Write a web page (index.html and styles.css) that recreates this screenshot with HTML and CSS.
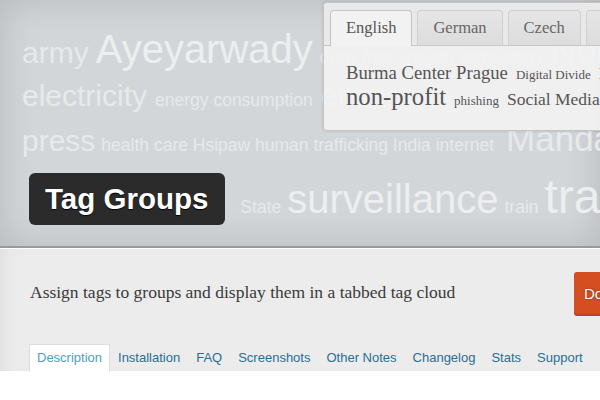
FILE: index.html
```html
<!DOCTYPE html>
<html>
<head>
<meta charset="utf-8">
<title>Tag Groups</title>
<link rel="stylesheet" href="styles.css">
</head>
<body>
<header class="hero">
  <div class="cloud">
    <div class="row r1"><span class="w30">army</span><span class="w40">Ayeyarwady</span><span class="w17">draw free speech technology</span><span class="w36">Non-violence</span></div>
    <div class="row r2"><span class="w30">electricity</span><span class="w17">energy consumption</span><span class="w30">ethnic</span><span class="w17">Facebook</span></div>
    <div class="row r3"><span class="w30">press</span><span class="w17">health care Hsipaw human trafficking India internet</span><span class="w35 mandalay">Mandalay</span></div>
    <div class="row r4"><div class="badge">Tag Groups</div><span class="w17">State</span><span class="w40">surveillance</span><span class="w17">train</span><span class="w48">transparency</span></div>
  </div>
  <div class="langs">
    <div class="lang-tabs">
      <span class="lang-tab active">English</span>
      <span class="lang-tab">German</span>
      <span class="lang-tab">Czech</span>
      <span class="lang-tab">Burmese</span>
    </div>
    <div class="lang-cloud">
      <div class="lrow"><span class="s19">Burma Center Prague</span><span class="s13">Digital Divide</span><span class="s17">Internet</span></div>
      <div class="lrow second"><span class="s25">non-profit</span><span class="s13">phishing</span><span class="s17">Social Media</span></div>
    </div>
  </div>
</header>
<section class="plugin">
  <div class="intro">
    <p class="desc">Assign tags to groups and display them in a tabbed tag cloud</p>
    <a class="download">Download Version 0.8</a>
  </div>
  <nav class="tabs">
    <a class="tab current">Description</a>
    <a class="tab">Installation</a>
    <a class="tab">FAQ</a>
    <a class="tab">Screenshots</a>
    <a class="tab">Other Notes</a>
    <a class="tab">Changelog</a>
    <a class="tab">Stats</a>
    <a class="tab">Support</a>
  </nav>
</section>
<div class="rest"></div>
</body>
</html>
```

FILE: styles.css
```css
html, body {
  margin: 0;
  padding: 0;
  background: #ffffff;
  overflow: hidden;
  width: 600px;
  height: 400px;
}

.hero {
  position: relative;
  height: 246px;
  background: #d3d6d9;
  box-shadow: inset 0 0 36px rgba(0, 0, 0, 0.14);
  border-bottom: 2px solid #979b9f;
  overflow: hidden;
  font-family: "Liberation Sans", Arial, sans-serif;
}

.cloud {
  padding: 29px 0 0 22px;
  color: #e7e9eb;
}

.row {
  display: flex;
  align-items: baseline;
  gap: 7px;
  white-space: nowrap;
  line-height: 1;
}

.row span { line-height: 1; }

.r2 { margin-top: 12px; gap: 8px; }
.r3 { margin-top: 10px; gap: 6px; }
.r4 { margin-top: 17px; gap: 6px; }

.w17 { font-size: 17.5px; }
.w30 { font-size: 30px; }
.w35 { font-size: 35px; }
.w36 { font-size: 36px; }
.w40 { font-size: 40px; color: #eceef0; }
.w48 { font-size: 48px; color: #eceef0; }

.mandalay { margin-left: 6px; }

.badge {
  align-self: flex-start;
  margin-left: 7px;
  margin-right: 9px;
  height: 52px;
  line-height: 52px;
  padding: 0 17px 0 16px;
  background: #2b2b2b;
  border-radius: 6px;
  color: #ffffff;
  font-weight: bold;
  font-size: 29.5px;
  text-shadow: 0 1px 1px #000;
}

/* language tab panel overlay */
.langs {
  position: absolute;
  left: 323px;
  top: 2px;
  width: 300px;
  height: 127px;
  background: rgba(242, 242, 242, 0.93);
  border: 1px solid #c4c4c4;
  border-radius: 4px;
  box-shadow: 0 0 3px rgba(0, 0, 0, 0.15);
  font-family: "Liberation Serif", "Times New Roman", serif;
}

.lang-tabs {
  display: flex;
  gap: 5px;
  padding: 7px 0 0 6px;
  border-bottom: 1px solid #c8c8c8;
  background: rgba(232, 232, 232, 0.9);
  border-radius: 4px 4px 0 0;
}

.lang-tab {
  height: 34px;
  line-height: 34px;
  padding: 0 15px;
  font-size: 16.5px;
  color: #666666;
  border: 1px solid #cfcfcf;
  border-bottom: none;
  border-radius: 4px 4px 0 0;
  background: linear-gradient(#e6e6e6, #dcdcdc);
  white-space: nowrap;
}

.lang-tab.active {
  color: #555555;
  background: #f2f2f2;
  border-color: #c4c4c4;
  height: 35px;
  margin-bottom: -1px;
}

.lang-cloud {
  padding: 18px 0 0 22px;
  color: #555555;
}

.lrow {
  display: flex;
  align-items: baseline;
  gap: 8px;
  white-space: nowrap;
  line-height: 1;
}

.lrow.second { margin-top: 2px; }

.s13 { font-size: 13px; }
.s17 { font-size: 17.5px; }
.s19 { font-size: 18.7px; }
.s25 { font-size: 24.7px; }

/* plugin info section */
.plugin {
  background: #ececec;
  border-top: 1px solid #ffffff;
  box-shadow: inset 12px 0 20px -12px rgba(0, 0, 0, 0.08);
  height: 123px;
  box-sizing: border-box;
  padding: 23px 0 0 29px;
}

.intro {
  display: flex;
  align-items: center;
  width: 760px;
}

.desc {
  flex-shrink: 0;
  margin: 0 0 0 1px;
  padding-bottom: 4px;
  width: 544px;
  font-family: "Liberation Serif", "Times New Roman", serif;
  font-size: 17.5px;
  line-height: 16px;
  color: #3a3a3a;
}

.download {
  display: block;
  flex-shrink: 0;
  height: 44px;
  line-height: 44px;
  padding: 0 10px;
  background: #d54e21;
  border-radius: 3px;
  color: #ffffff;
  font-family: "Liberation Sans", Arial, sans-serif;
  font-size: 15px;
  text-shadow: 0 0 2px #7a2a10;
  white-space: nowrap;
  box-shadow: inset 0 -2px 0 rgba(0, 0, 0, 0.12);
}

.tabs {
  display: flex;
  margin-top: 28px;
  font-family: "Liberation Sans", Arial, sans-serif;
  font-size: 13px;
}

.tab {
  height: 26px;
  line-height: 26px;
  padding: 0 7px;
  border: 1px solid transparent;
  border-bottom: none;
  color: #2b6e94;
  white-space: nowrap;
}

.tab.current {
  background: #ffffff;
  border-color: #dedede;
  color: #4f9ec0;
  height: 27px;
}

.rest {
  height: 28px;
  background: #ffffff;
}
```
